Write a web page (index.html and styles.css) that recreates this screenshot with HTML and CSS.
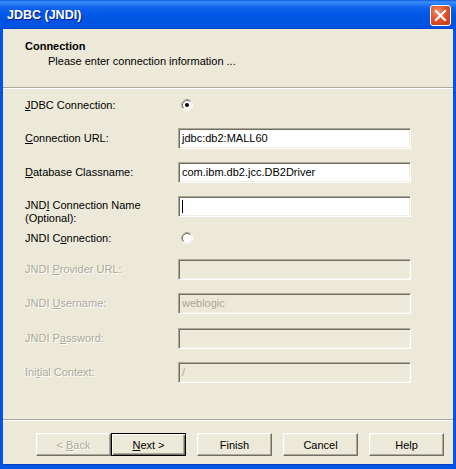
FILE: index.html
```html
<!DOCTYPE html>
<html>
<head>
<meta charset="utf-8">
<link rel="stylesheet" href="styles.css">
</head>
<body>
<div class="window">
  <div class="titlebar">
    <span class="title">JDBC (JNDI)</span>
    <div class="close">
      <svg width="21" height="21" viewBox="0 0 21 21">
        <path d="M6 6 L15 15 M15 6 L6 15" stroke="#fff" stroke-width="2.2" stroke-linecap="square"/>
      </svg>
    </div>
  </div>
  <div class="frame">
    <div class="header">
      <div class="h-title">Connection</div>
      <div class="h-sub">Please enter connection information ...</div>
    </div>
    <div class="sep"></div>
    <div class="form">
      <div class="row r1">
        <div class="label"><u>J</u>DBC Connection:</div>
        <div class="ctrl"><svg class="radio" width="12" height="12" viewBox="0 0 12 12">
          <circle cx="6" cy="6" r="5" fill="#fff"/>
          <path d="M2.11 9.89 A5.5 5.5 0 0 1 9.89 2.11" stroke="#aca899" fill="none"/>
          <path d="M9.89 2.11 A5.5 5.5 0 0 1 2.11 9.89" stroke="#fff" fill="none"/>
          <path d="M2.82 9.18 A4.5 4.5 0 0 1 9.18 2.82" stroke="#716f64" fill="none"/>
          <path d="M9.18 2.82 A4.5 4.5 0 0 1 2.82 9.18" stroke="#f1efe2" fill="none"/>
          <circle cx="6" cy="6" r="2" fill="#000"/>
        </svg></div>
      </div>
      <div class="row r2">
        <div class="label"><u>C</u>onnection URL:</div>
        <div class="ctrl"><div class="field">jdbc:db2:MALL60</div></div>
      </div>
      <div class="row r3">
        <div class="label"><u>D</u>atabase Classname:</div>
        <div class="ctrl"><div class="field">com.ibm.db2.jcc.DB2Driver</div></div>
      </div>
      <div class="row r4">
        <div class="label two">JND<u>I</u> Connection Name<br>(Optional):</div>
        <div class="ctrl"><div class="field"><span class="caret"></span></div></div>
      </div>
      <div class="row r5">
        <div class="label">JNDI C<u>o</u>nnection:</div>
        <div class="ctrl"><svg class="radio" width="12" height="12" viewBox="0 0 12 12">
          <circle cx="6" cy="6" r="5" fill="#fff"/>
          <path d="M2.11 9.89 A5.5 5.5 0 0 1 9.89 2.11" stroke="#aca899" fill="none"/>
          <path d="M9.89 2.11 A5.5 5.5 0 0 1 2.11 9.89" stroke="#fff" fill="none"/>
          <path d="M2.82 9.18 A4.5 4.5 0 0 1 9.18 2.82" stroke="#716f64" fill="none"/>
          <path d="M9.18 2.82 A4.5 4.5 0 0 1 2.82 9.18" stroke="#f1efe2" fill="none"/>
        </svg></div>
      </div>
      <div class="row r6">
        <div class="label dis">JNDI <u>P</u>rovider URL:</div>
        <div class="ctrl"><div class="field disabled"></div></div>
      </div>
      <div class="row r7">
        <div class="label dis">JNDI <u>U</u>sername:</div>
        <div class="ctrl"><div class="field disabled">weblogic</div></div>
      </div>
      <div class="row r8">
        <div class="label dis">JNDI P<u>a</u>ssword:</div>
        <div class="ctrl"><div class="field disabled"></div></div>
      </div>
      <div class="row r9">
        <div class="label dis">Ini<u>t</u>ial Context:</div>
        <div class="ctrl"><div class="field disabled">/</div></div>
      </div>
    </div>
    <div class="sep"></div>
    <div class="buttons">
      <div class="btn disabled"><span>&lt; <u>B</u>ack</span></div>
      <div class="btn default"><span><u>N</u>ext &gt;</span></div>
      <div class="btn gap"><span>Finish</span></div>
      <div class="btn gap"><span>Cancel</span></div>
      <div class="btn gap"><span>Help</span></div>
    </div>
  </div>
</div>
</body>
</html>
```

FILE: styles.css
```css
html, body {
  margin: 0;
  padding: 0;
  background: #ffffff;
}
.window {
  width: 456px;
  height: 469px;
  display: flex;
  flex-direction: column;
  font-family: "Liberation Sans", Arial, sans-serif;
  font-size: 11px;
  color: #000;
}
.titlebar {
  height: 29px;
  flex: none;
  display: flex;
  align-items: center;
  justify-content: space-between;
  padding: 0 5px 0 7px;
  box-sizing: border-box;
  background: linear-gradient(to bottom, #0a5adf 0px, #3d8ff8 2px, #2a7cf4 4px, #0e62ec 8px, #0058e6 14px, #0053e0 22px, #0055e6 26px, #0046cf 29px);
}
.title {
  color: #fff;
  font-weight: bold;
  font-size: 12.5px;
  text-shadow: 1px 1px 0 #0a1e8c;
  margin-top: 1px;
}
.close {
  width: 21px;
  height: 21px;
  box-sizing: border-box;
  border: 1px solid #fff;
  border-radius: 3px;
  background: radial-gradient(circle at 35% 30%, #f0906a 0%, #e0522a 45%, #c63610 100%);
  display: flex;
  align-items: center;
  justify-content: center;
  margin-top: 2px;
}
.close svg {
  display: block;
  margin: -1px;
}
.frame {
  flex: 1;
  display: flex;
  flex-direction: column;
  background: #ece9d8;
  border-left: 3px solid #0055e5;
  border-right: 3px solid #0055e5;
  border-bottom: 4px solid #0055e5;
  box-shadow: inset 0 -1px 0 #0a3bc0;
}
.header {
  height: 58px;
  box-sizing: border-box;
  padding: 11px 0 0 22px;
  flex: none;
}
.h-title {
  font-weight: bold;
  line-height: 13px;
}
.h-sub {
  line-height: 13px;
  margin-top: 2px;
  padding-left: 23px;
}
.sep {
  flex: none;
  border-top: 1px solid #aca899;
  border-bottom: 1px solid #fff;
  height: 0;
}
.form {
  flex: 1;
  padding: 6px 0 0 22px;
}
.row {
  display: flex;
  align-items: center;
  height: 21px;
  margin-top: 13px;
}
.r1 { margin-top: 0; height: 20px; }
.r5 { margin-top: 11px; height: 20px; }
.r6 { margin-top: 11px; }
.r8 { margin-top: 14px; }
.label {
  width: 153px;
  flex: none;
  line-height: 13px;
  white-space: nowrap;
}
.label.two {
  align-self: flex-start;
  padding-top: 3px;
}
.label.dis {
  color: #aca899;
  text-shadow: 1px 1px 0 #fff;
}
.ctrl {
  display: flex;
  align-items: center;
}
.radio {
  display: block;
  margin-left: 3px;
  margin-top: -1px;
}
.field {
  width: 233px;
  height: 21px;
  box-sizing: border-box;
  border: 1px solid;
  border-color: #aca899 #fff #fff #aca899;
  box-shadow: inset 1px 1px 0 #716f64, inset -1px -1px 0 #f1efe2;
  background: #fff;
  padding: 0 0 0 3px;
  line-height: 19px;
  display: flex;
  align-items: center;
  white-space: nowrap;
}
.field.disabled {
  background: #ece9d8;
  color: #aca899;
}
.caret {
  display: block;
  width: 1px;
  height: 13px;
  background: #000;
}
.buttons {
  height: 44px;
  flex: none;
  box-sizing: border-box;
  padding: 12px 9px 0 0;
  display: flex;
  justify-content: flex-end;
  align-items: flex-start;
}
.btn {
  width: 75px;
  height: 23px;
  box-sizing: border-box;
  border: 1px solid;
  border-color: #fff #716f64 #716f64 #fff;
  box-shadow: inset -1px -1px 0 #aca899, inset 1px 1px 0 #f1efe2;
  display: flex;
  align-items: center;
  justify-content: center;
  background: #ece9d8;
  white-space: pre;
}
.btn.gap { margin-left: 11px; }
.btn.default {
  border: 1px solid #000;
  box-shadow: inset 1px 1px 0 #fff, inset -1px -1px 0 #716f64, inset -2px -2px 0 #aca899;
}
.btn.disabled {
  color: #aca899;
  text-shadow: 1px 1px 0 #fff;
}
u { text-decoration: underline; text-underline-offset: 1px; }
```
